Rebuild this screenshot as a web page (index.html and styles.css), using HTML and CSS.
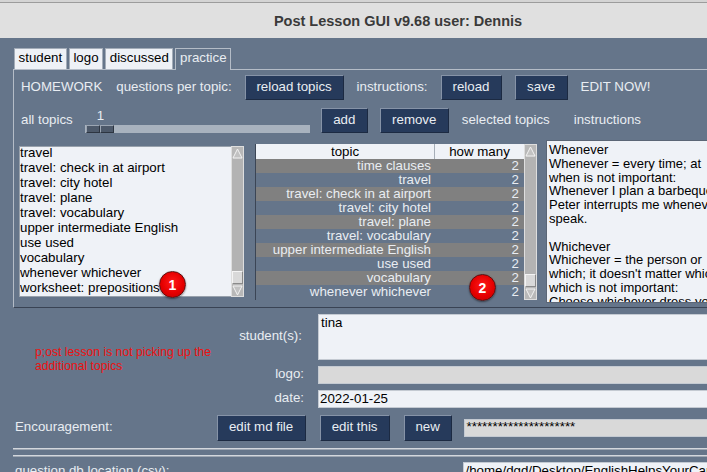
FILE: index.html
```html
<!DOCTYPE html>
<html>
<head>
<meta charset="utf-8">
<title>Post Lesson GUI</title>
<link rel="stylesheet" href="styles.css">
</head>
<body>
<div class="strip"></div>
<div class="titlebar">Post Lesson GUI v9.68 user: Dennis</div>
<div class="main">
  <div class="tabs">
    <div class="tab">student</div>
    <div class="tab">logo</div>
    <div class="tab">discussed</div>
    <div class="tab active">practice</div>
  </div>
  <div class="panel">
    <div class="row row1">
      <span class="lbl">HOMEWORK</span>
      <span class="lbl qpt">questions per topic:</span>
      <button class="btn b-reload-topics">reload topics</button>
      <span class="lbl">instructions:</span>
      <button class="btn b-reload">reload</button>
      <button class="btn b-save">save</button>
      <span class="lbl">EDIT NOW!</span>
    </div>
    <div class="row row2">
      <span class="lbl">all topics</span>
      <div class="slider">
        <div class="slider-val">1</div>
        <div class="trough"><span class="handle"></span><span class="handle"></span></div>
      </div>
      <button class="btn b-add">add</button>
      <button class="btn b-remove">remove</button>
      <span class="lbl sel">selected topics</span>
      <span class="lbl instr">instructions</span>
    </div>
    <div class="lists">
      <div class="listbox">
        <div class="lb-body">
          <div class="lb-items">
            <div>travel</div>
            <div>travel: check in at airport</div>
            <div>travel: city hotel</div>
            <div>travel: plane</div>
            <div>travel: vocabulary</div>
            <div>upper intermediate English</div>
            <div>use used</div>
            <div>vocabulary</div>
            <div>whenever whichever</div>
            <div>worksheet: prepositions</div>
          </div>
        </div>
        <div class="sb">
          <div class="arr"><svg width="11" height="11" viewBox="0 0 11 11"><path d="M5.5 1 L10 10 L1 10 Z" fill="#c2c2c2" stroke="#f2f2f2" stroke-width="1"/></svg></div>
          <div class="track"><div class="thumb"></div></div>
          <div class="arr dn"><svg width="11" height="11" viewBox="0 0 11 11"><path d="M1 1 L10 1 L5.5 10 Z" fill="#c2c2c2" stroke="#f2f2f2" stroke-width="1"/></svg></div>
        </div>
      </div>
      <div class="tree">
        <div class="tv-body">
          <div class="tv-head">
            <div class="c1">topic</div>
            <div class="c2">how many</div>
          </div>
          <div class="tv-row odd"><div class="c1">time clauses</div><div class="c2">2</div></div>
          <div class="tv-row"><div class="c1">travel</div><div class="c2">2</div></div>
          <div class="tv-row odd"><div class="c1">travel: check in at airport</div><div class="c2">2</div></div>
          <div class="tv-row"><div class="c1">travel: city hotel</div><div class="c2">2</div></div>
          <div class="tv-row odd"><div class="c1">travel: plane</div><div class="c2">2</div></div>
          <div class="tv-row"><div class="c1">travel: vocabulary</div><div class="c2">2</div></div>
          <div class="tv-row odd"><div class="c1">upper intermediate English</div><div class="c2">2</div></div>
          <div class="tv-row"><div class="c1">use used</div><div class="c2">2</div></div>
          <div class="tv-row odd"><div class="c1">vocabulary</div><div class="c2">2</div></div>
          <div class="tv-row"><div class="c1">whenever whichever</div><div class="c2">2</div></div>
        </div>
        <div class="sb">
          <div class="arr"><svg width="11" height="11" viewBox="0 0 11 11"><path d="M5.5 1 L10 10 L1 10 Z" fill="#c2c2c2" stroke="#f2f2f2" stroke-width="1"/></svg></div>
          <div class="track"><div class="thumb"></div></div>
          <div class="arr dn"><svg width="11" height="11" viewBox="0 0 11 11"><path d="M1 1 L10 1 L5.5 10 Z" fill="#c2c2c2" stroke="#f2f2f2" stroke-width="1"/></svg></div>
        </div>
      </div>
      <div class="textw">
        <div>Whenever</div>
        <div>Whenever = every time; at</div>
        <div>when is not important:</div>
        <div>Whenever I plan a barbeque</div>
        <div>Peter interrupts me whenever</div>
        <div>speak.</div>
        <div>&nbsp;</div>
        <div>Whichever</div>
        <div>Whichever = the person or</div>
        <div>which; it doesn't matter which</div>
        <div>which is not important:</div>
        <div>Choose whichever dress you</div>
      </div>
      <div class="badge b1">1</div>
      <div class="badge b2">2</div>
    </div>
  </div>

  <div class="form">
    <div class="note">p;ost lesson is not picking up the<br>additional topics</div>
    <div class="flabel r1 stud">student(s):</div>
    <div class="tbox r1">tina</div>
    <div class="flabel r2">logo:</div>
    <div class="entry grey r2"></div>
    <div class="flabel r3">date:</div>
    <div class="entry r3">2022-01-25</div>
  </div>

  <div class="enc">
    <span class="lbl">Encouragement:</span>
    <button class="btn b-editmd">edit md file</button>
    <button class="btn b-editthis">edit this</button>
    <button class="btn b-new">new</button>
    <div class="entry grey pw">*********************</div>
  </div>

  <div class="sep"></div>
  <div class="sep sep2"></div>

  <div class="dbrow">
    <span class="lbl">question db location (csv):</span>
    <div class="entry db">/home/dgd/Desktop/EnglishHelpsYourCareer/questions.csv</div>
  </div>
</div>
</body>
</html>
```
FILE: styles.css
```css
* { box-sizing: border-box; }
html, body { margin: 0; padding: 0; }
body {
  width: 707px;
  height: 472px;
  overflow: hidden;
  background: #65758a;
  font-family: "Liberation Sans", Arial, sans-serif;
  font-size: 13.3px;
  color: #e9edf2;
}
.strip {
  width: 796px;
  height: 3px;
  background: #d4d4d4;
  border-bottom: 1px solid #9c9c9c;
}
.titlebar {
  width: 796px;
  height: 35px;
  background: #e0e0e0;
  color: #3a3a3a;
  font-weight: bold;
  font-size: 14.5px;
  display: flex;
  align-items: center;
  justify-content: center;
}
.main {
  width: 796px;
  padding-top: 10px;
}
.tabs {
  display: flex;
  align-items: flex-start;
  gap: 2px;
  margin-left: 14px;
  height: 21px;
  position: relative;
  z-index: 1;
}
.tab {
  height: 21px;
  padding: 0 3.6px;
  border: 1px solid #a3acb8;
  border-bottom: none;
  background: #eef1f6;
  color: #000;
  line-height: 17px;
  white-space: nowrap;
}
.tab.active {
  height: 22px;
  background: #65758a;
  color: #e9edf2;
  border-color: #b4bcc7;
}
.panel {
  margin-left: 13px;
  border-top: 1px solid #b4bcc7;
  border-left: 1px solid #b4bcc7;
  border-bottom: 1px solid #394354;
  padding: 5px 0 4px 7px;
}
.row {
  display: flex;
  align-items: center;
  height: 25px;
  white-space: nowrap;
}
.row1 { gap: 13px; }
.row1 .qpt { margin-left: 1px; }
.row2 { margin-top: 8px; }
.lbl { white-space: nowrap; }
.row .lbl, .enc .lbl { padding-bottom: 3px; }
.btn {
  appearance: none;
  -webkit-appearance: none;
  margin: 0;
  padding: 0 0 3px 0;
  height: 25px;
  background: #263a5b;
  color: #e9edf2;
  font-family: inherit;
  font-size: 13.3px;
  border: 1px solid;
  border-color: #8693a7 #1c2a42 #1c2a42 #8693a7;
  text-align: center;
  white-space: nowrap;
}
.b-reload-topics { width: 99px; }
.b-reload { width: 61px; }
.b-save { width: 53px; }
.b-add { width: 47px; margin-left: 11px; }
.b-remove { width: 69px; margin-left: 12px; }
.sel { margin-left: 13px; }
.instr { margin-left: 24px; }

.slider {
  margin-left: 12px;
  width: 225px;
  height: 25px;
  display: flex;
  flex-direction: column;
}
.slider-val {
  height: 15px;
  line-height: 15px;
  padding-left: 12px;
}
.trough {
  margin-top: 2px;
  height: 8px;
  background: #a8b2be;
  display: flex;
  padding-left: 1px;
}
.handle {
  width: 14px;
  height: 8px;
  background: #4d596a;
  border: 1px solid;
  border-color: #9ba5b2 #2d3541 #2d3541 #9ba5b2;
}

.lists {
  position: relative;
  margin-top: 7px;
  height: 163px;
  display: flex;
  align-items: flex-start;
}
.listbox {
  margin-left: -2px;
  margin-top: 6px;
  width: 225px;
  height: 151px;
  display: flex;
}
.lb-body {
  flex: 1;
  height: 100%;
  background: #eff2f7;
  border: 1px solid #98a1ac;
  border-right: none;
  overflow: hidden;
  color: #000;
}
.lb-items {
  margin-top: -2px;
  line-height: 15px;
  white-space: nowrap;
}
.sb {
  width: 13px;
  height: 100%;
  flex: none;
  background: #b3b3b3;
  border: 1px solid #dedede;
  display: flex;
  flex-direction: column;
}
.arr {
  height: 12px;
  flex: none;
  display: flex;
  align-items: center;
  justify-content: center;
  background: #b8b8b8;
}
.arr svg { display: block; }
.track {
  flex: 1;
  display: flex;
  flex-direction: column;
  justify-content: flex-end;
}
.thumb {
  height: 13px;
  background: #d9d9d9;
  border: 1px solid;
  border-color: #f4f4f4 #8a8a8a #8a8a8a #f4f4f4;
}

.tree {
  margin-left: 11px;
  margin-top: 4px;
  width: 282px;
  height: 156px;
  display: flex;
}
.tv-body {
  flex: 1;
  height: 100%;
  border-left: 1px solid #3b4555;
  overflow: hidden;
}
.tv-head {
  display: flex;
  height: 15px;
  line-height: 15px;
  background: #eff2f7;
  color: #000;
}
.tv-head .c1 {
  width: 179px;
  text-align: center;
  border-right: 1px solid #a6aeb8;
}
.tv-head .c2 {
  flex: 1;
  text-align: center;
}
.tv-row {
  display: flex;
  height: 14px;
  line-height: 14px;
  color: #e9edf2;
  white-space: nowrap;
}
.tv-row.odd { background: #808080; }
.tv-row .c1 {
  width: 179px;
  text-align: right;
  padding-right: 4px;
}
.tv-row .c2 {
  flex: 1;
  text-align: right;
  padding-right: 5px;
}

.textw {
  margin-left: 9px;
  flex: 1;
  height: 163px;
  background: #eff2f7;
  border: 1px solid #5b6676;
  padding: 2px 0 0 2px;
  color: #000;
  font-size: 13px;
  line-height: 13.8px;
  white-space: nowrap;
  overflow: hidden;
}

.badge {
  position: absolute;
  width: 27px;
  height: 27px;
  border-radius: 50%;
  background: radial-gradient(circle at 50% 42%, #ff1a1a 0, #e60000 55%, #b80000 100%);
  border: 1.5px solid #5c0f0f;
  box-shadow: 0 1px 2px rgba(0,0,0,0.45);
  color: #fff;
  font-weight: bold;
  font-size: 14px;
  display: flex;
  align-items: center;
  justify-content: center;
}
.b1 { left: 138px; top: 131px; }
.b2 { left: 448px; top: 134px; }

.form {
  margin-top: 6px;
  display: grid;
  grid-template-columns: 304px 1fr;
  grid-template-rows: 46px 18px 18px;
  column-gap: 14px;
  row-gap: 6px;
}
.note {
  grid-column: 1;
  grid-row: 1 / 4;
  align-self: start;
  margin-top: 31px;
  padding-left: 35px;
  color: #ee1111;
  font-size: 12.2px;
  line-height: 14px;
  white-space: nowrap;
}
.flabel {
  grid-column: 1;
  justify-self: end;
  align-self: center;
  white-space: nowrap;
  padding-bottom: 3px;
}
.flabel.stud { padding-right: 2px; }
.r1 { grid-row: 1; }
.r2 { grid-row: 2; }
.r3 { grid-row: 3; }
.tbox, .entry { grid-column: 2; }
.tbox {
  background: #eff2f7;
  border: 1px solid #c4cad2;
  color: #000;
  line-height: 15px;
  padding-left: 2px;
}
.entry {
  height: 18px;
  background: #eff2f7;
  border: 1px solid #c4cad2;
  color: #000;
  line-height: 16px;
  padding-left: 1px;
  white-space: nowrap;
  overflow: hidden;
}
.entry.grey { background: #d9d9d9; }

.enc {
  margin-top: 7px;
  height: 26px;
  display: flex;
  align-items: center;
  padding-left: 15px;
}
.enc .btn { height: 26px; }
.b-editmd { width: 89px; margin-left: 104px; }
.b-editthis { width: 70px; margin-left: 14px; }
.b-new { width: 48px; margin-left: 14px; }
.pw {
  flex: 1;
  margin-left: 12px;
  line-height: 14px;
  padding-left: 2px;
}
.sep {
  margin-top: 7px;
  margin-left: 13px;
  height: 2px;
  background: #d3d7dd;
  border-bottom: 1px solid #9da6b2;
}
.sep2 { margin-top: 5px; }
.dbrow {
  margin-top: 5px;
  height: 18px;
  display: flex;
  align-items: flex-start;
  padding-left: 15px;
}
.dbrow .lbl { line-height: 18px; }
.entry.db {
  margin-left: 294px;
  flex: 1;
}
```
